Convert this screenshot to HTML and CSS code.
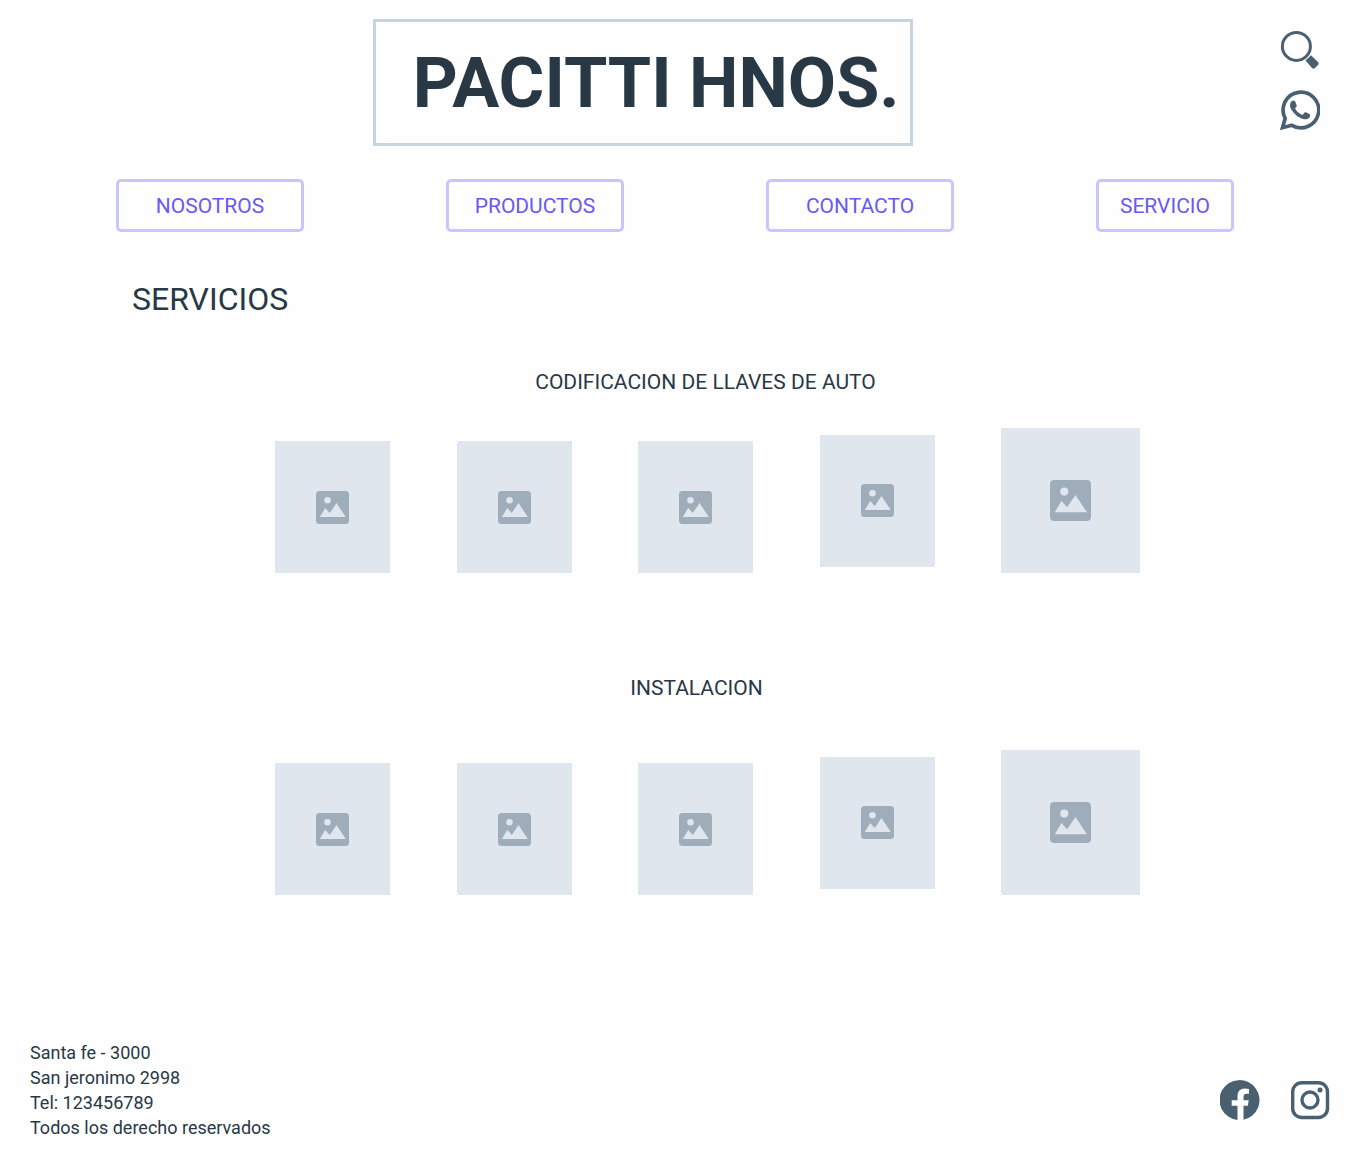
FILE: index.html
```html
<!DOCTYPE html>
<html lang="es">
<head>
<meta charset="utf-8">
<meta name="viewport" content="width=device-width, initial-scale=1">
<title>Pacitti Hnos. - Servicios</title>
<link rel="stylesheet" href="styles.css">
</head>
<body>
<svg class="sprite" aria-hidden="true">
  <symbol id="picture" viewBox="0 0 33 33">
    <path fill-rule="evenodd" d="M3.500 0H29.500Q33 0 33 3.500V29.500Q33 33 29.500 33H3.500Q0 33 0 29.500V3.500Q0 0 3.500 0ZM11.500 6A3.300 3.300 0 1 0 11.500 12.600A3.300 3.300 0 1 0 11.500 6ZM3.800 26H29.800L20.500 12L13.800 22L9.200 17Z"/>
  </symbol>
</svg>
<header class="header">
  <h1 class="brand">PACITTI HNOS.</h1>
  <div class="tools">
    <button class="icon-button" type="button" aria-label="Buscar">
      <svg viewBox="0 0 40 40"><circle cx="16.400" cy="16.400" r="14" fill="none" stroke="currentColor" stroke-width="3"/><path fill="currentColor" d="M25.500 30.500 31 25.300 38 32Q39.500 33.500 38 35L35 38Q33.500 39.400 32 38Z"/></svg>
    </button>
    <a class="icon-button" href="#whatsapp" aria-label="WhatsApp">
      <svg viewBox="0 0 24 24" fill="currentColor"><path d="M17.472 14.382c-.297-.149-1.758-.867-2.030-.967-.273-.099-.471-.148-.670.150-.197.297-.767.966-.940 1.164-.173.199-.347.223-.644.075-.297-.150-1.255-.463-2.390-1.475-.883-.788-1.480-1.761-1.653-2.059-.173-.297-.018-.458.130-.606.134-.133.298-.347.446-.520.149-.174.198-.298.298-.497.099-.198.050-.371-.025-.520-.075-.149-.669-1.612-.916-2.207-.242-.579-.487-.500-.669-.510-.173-.008-.371-.010-.570-.010-.198 0-.520.074-.792.372-.272.297-1.040 1.016-1.040 2.479 0 1.462 1.065 2.875 1.213 3.074.149.198 2.096 3.200 5.077 4.487.709.306 1.262.489 1.694.625.712.227 1.360.195 1.871.118.571-.085 1.758-.719 2.006-1.413.248-.694.248-1.289.173-1.413-.074-.124-.272-.198-.570-.347"/><path fill="none" stroke="currentColor" stroke-width="2.200" stroke-linejoin="miter" d="M1.500 22.600 3.100 17A10.700 10.700 0 1 1 7.100 21.200Z"/></svg>
    </a>
  </div>
</header>
<nav class="nav" aria-label="Principal">
  <button class="nav-button" type="button">NOSOTROS</button>
  <button class="nav-button nav-button-medium" type="button">PRODUCTOS</button>
  <button class="nav-button" type="button">CONTACTO</button>
  <button class="nav-button nav-button-small" type="button">SERVICIO</button>
</nav>
<main class="main">
  <h2 class="page-title">SERVICIOS</h2>
  <section class="group">
    <h3 class="group-title">CODIFICACION DE LLAVES DE AUTO</h3>
    <div class="gallery">
      <div class="tile"><svg><use href="#picture"/></svg></div>
      <div class="tile"><svg><use href="#picture"/></svg></div>
      <div class="tile"><svg><use href="#picture"/></svg></div>
      <div class="tile tile-raised"><svg><use href="#picture"/></svg></div>
      <div class="tile tile-large"><svg viewBox="0 0 33 33"><use href="#picture"/></svg></div>
    </div>
  </section>
  <section class="group group-install">
    <h3 class="group-title">INSTALACION</h3>
    <div class="gallery">
      <div class="tile"><svg><use href="#picture"/></svg></div>
      <div class="tile"><svg><use href="#picture"/></svg></div>
      <div class="tile"><svg><use href="#picture"/></svg></div>
      <div class="tile tile-raised"><svg><use href="#picture"/></svg></div>
      <div class="tile tile-large"><svg viewBox="0 0 33 33"><use href="#picture"/></svg></div>
    </div>
  </section>
</main>
<footer class="footer">
  <address class="contact">Santa fe - 3000<br>San jeronimo 2998<br>Tel: 123456789<br>Todos los derecho reservados</address>
  <div class="social">
    <a class="icon-button" href="#facebook" aria-label="Facebook">
      <svg viewBox="0 0 40 40" fill="currentColor"><path d="M17.500 40A20 20 0 1 1 23.500 39.700V25.800H27.800L28.700 20.300H23.500V16.700Q23.500 13.800 26.500 13.800H29V9Q27 8.400 25 8.400Q17.500 8.400 17.500 16.200V20.300H11.700V25.800H17.500Z"/></svg>
    </a>
    <a class="icon-button" href="#instagram" aria-label="Instagram">
      <svg viewBox="0 0 40 40" fill="none" stroke="currentColor" stroke-width="3.400"><rect x="2.700" y="2.700" width="34.800" height="34.800" rx="9"/><circle cx="20" cy="20" r="8"/><circle cx="30" cy="10" r="2.500" fill="currentColor" stroke="none"/></svg>
    </a>
  </div>
</footer>
</body>
</html>
```
FILE: styles.css
```css
* {
  box-sizing: border-box;
}

body {
  display: flex;
  flex-direction: column;
  min-height: 100vh;
  margin: 0;
  background: #fefefe;
  color: #293845;
  font-family: Roboto, "Liberation Sans", sans-serif;
}

h1, h2, h3 {
  margin: 0;
}

.sprite {
  position: absolute;
  width: 0;
  height: 0;
}

.header {
  display: grid;
  grid-template-columns: 344fr auto 409fr;
  padding: 19px 30px 0;
}

.brand {
  grid-column: 2;
  padding: 19px 10px 18px 37px;
  border: 3px solid #c8d5df;
  font-size: 70px;
  font-weight: 700;
  line-height: 84px;
  white-space: nowrap;
}

.tools {
  display: flex;
  flex-direction: column;
  gap: 20px;
  justify-self: end;
  padding-top: 11px;
}

.icon-button {
  display: block;
  width: 40px;
  height: 40px;
  padding: 0;
  border: 0;
  background: none;
  color: #4a6070;
  cursor: pointer;
}

.icon-button svg {
  display: block;
  width: 40px;
  height: 40px;
}

.nav {
  display: flex;
  justify-content: space-between;
  gap: 16px;
  padding: 33px 116px 0;
}

.nav-button {
  width: 188px;
  height: 53px;
  padding: 0;
  border: 3px solid #cbc5fd;
  border-radius: 5px;
  background: none;
  color: #6859f5;
  font: 400 21px/28px Roboto, "Liberation Sans", sans-serif;
  cursor: pointer;
}

.nav-button-medium {
  width: 178px;
}

.nav-button-small {
  width: 138px;
}

.main {
  flex: 1;
}

.page-title {
  padding: 47px 132px 0;
  font-size: 32px;
  font-weight: 400;
  line-height: 40px;
}

.group {
  padding: 49px 210px 0 275px;
}

.group-install {
  padding-top: 101px;
}

.group-title {
  padding-right: 4px;
  font-size: 21px;
  font-weight: 400;
  line-height: 28px;
  text-align: center;
}

.group-install .group-title {
  padding-right: 22px;
}

.gallery {
  display: flex;
  align-items: flex-end;
  justify-content: space-between;
  margin-top: 32px;
}

.group-install .gallery {
  margin-top: 48px;
}

.tile {
  display: flex;
  align-items: center;
  justify-content: center;
  width: 115px;
  height: 132px;
  background: #dfe6ed;
  fill: #9eadb9;
}

.tile svg {
  width: 33px;
  height: 33px;
}

.tile-raised {
  align-self: center;
}

.tile-large {
  width: 139px;
  height: 145px;
}

.tile-large svg {
  width: 41px;
  height: 41px;
}

.footer {
  display: flex;
  align-items: center;
  justify-content: space-between;
  padding: 40px 20px 15px 30px;
}

.contact {
  font-size: 18px;
  font-style: normal;
  line-height: 25px;
}

.social {
  display: flex;
  gap: 30px;
  padding-top: 20px;
}
```
